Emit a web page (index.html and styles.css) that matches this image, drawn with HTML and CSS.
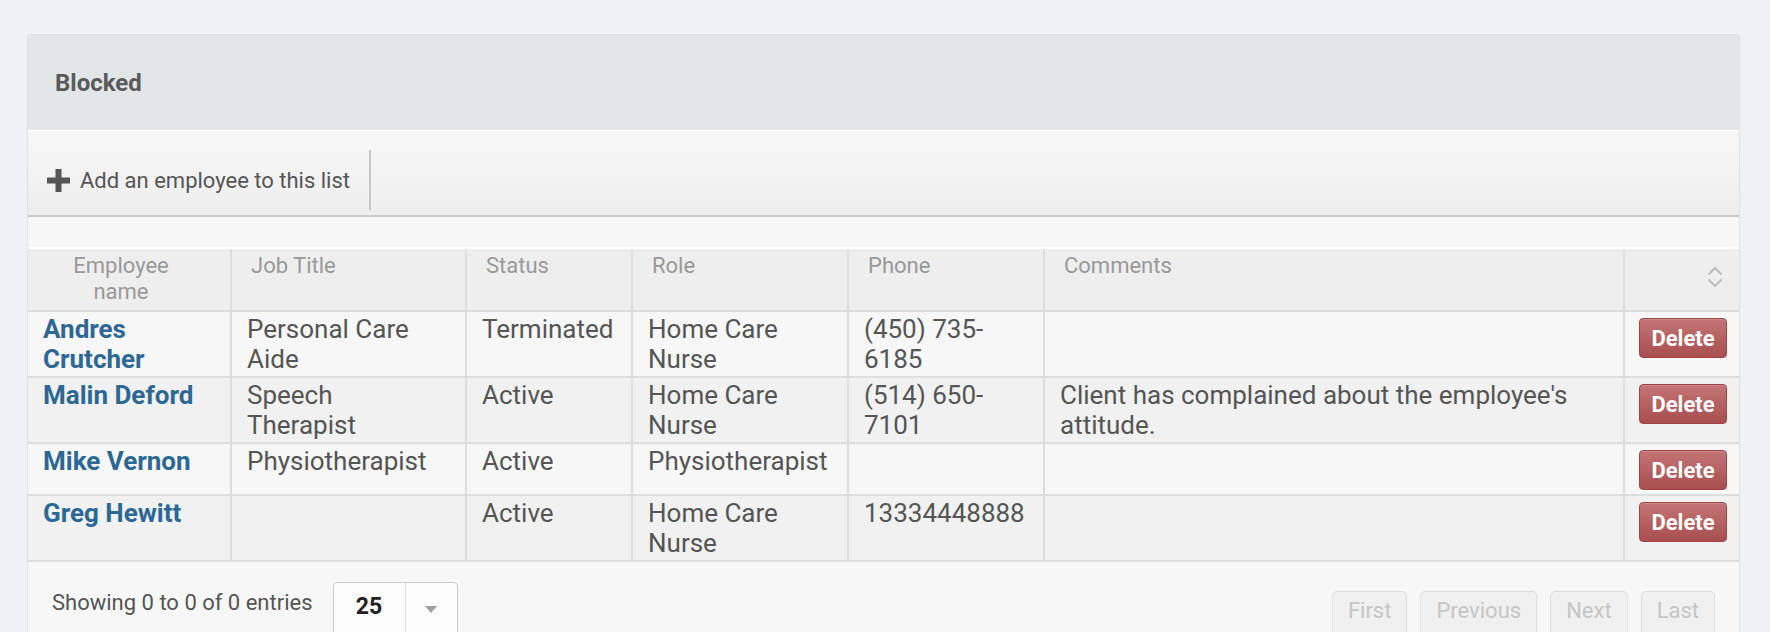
FILE: index.html
```html
<!DOCTYPE html>
<html>
<head>
<meta charset="utf-8">
<title>Blocked</title>
<link rel="stylesheet" href="styles.css">
</head>
<body>
<div class="panel">
  <div class="panel-heading">
    <h3 class="panel-title">Blocked</h3>
  </div>
  <div class="toolbar">
    <button class="tool-btn" type="button">
      <svg class="plus" width="23" height="23" viewBox="0 0 23 23"><path d="M8.5 0h6v8.5h8.5v6h-8.5v8.5h-6v-8.5h-8.5v-6h8.5z" fill="#555"/></svg>
      <span>Add an employee to this list</span>
    </button>
  </div>
  <div class="spacer"></div>
  <table class="grid">
    <colgroup>
      <col class="w-name"><col class="w-job"><col class="w-status"><col class="w-role"><col class="w-phone"><col class="w-comments"><col class="w-action">
    </colgroup>
    <thead>
      <tr>
        <th class="th-name">Employee name</th>
        <th>Job Title</th>
        <th>Status</th>
        <th>Role</th>
        <th>Phone</th>
        <th>Comments</th>
        <th class="th-action">
          <svg class="sort" width="16" height="24" viewBox="0 0 16 24"><path d="M1.5 9.5L8 3l6.5 6.5M1.5 14.5L8 21l6.5-6.5" fill="none" stroke="#bdbdbd" stroke-width="2"/></svg>
        </th>
      </tr>
    </thead>
    <tbody>
      <tr class="odd">
        <td class="name"><a href="#">Andres Crutcher</a></td>
        <td class="job">Personal Care Aide</td>
        <td>Terminated</td>
        <td>Home Care Nurse</td>
        <td>(450) 735-6185</td>
        <td></td>
        <td class="action"><button class="btn-delete" type="button">Delete</button></td>
      </tr>
      <tr class="even">
        <td class="name"><a href="#">Malin Deford</a></td>
        <td class="job">Speech Therapist</td>
        <td>Active</td>
        <td>Home Care Nurse</td>
        <td>(514) 650-7101</td>
        <td>Client has complained about the employee's attitude.</td>
        <td class="action"><button class="btn-delete" type="button">Delete</button></td>
      </tr>
      <tr class="odd">
        <td class="name"><a href="#">Mike Vernon</a></td>
        <td class="job">Physiotherapist</td>
        <td>Active</td>
        <td>Physiotherapist</td>
        <td></td>
        <td></td>
        <td class="action"><button class="btn-delete" type="button">Delete</button></td>
      </tr>
      <tr class="even">
        <td class="name"><a href="#">Greg Hewitt</a></td>
        <td class="job"></td>
        <td>Active</td>
        <td>Home Care Nurse</td>
        <td>13334448888</td>
        <td></td>
        <td class="action"><button class="btn-delete" type="button">Delete</button></td>
      </tr>
    </tbody>
  </table>
  <div class="footer">
    <div class="info">Showing 0 to 0 of 0 entries</div>
    <div class="length">
      <span class="length-val">25</span>
      <span class="length-caret"><span class="caret"></span></span>
    </div>
    <div class="pager">
      <button class="page-btn" type="button">First</button>
      <button class="page-btn" type="button">Previous</button>
      <button class="page-btn" type="button">Next</button>
      <button class="page-btn" type="button">Last</button>
    </div>
  </div>
</div>
</body>
</html>
```

FILE: styles.css
```css
html, body {
  margin: 0;
  padding: 0;
  overflow: hidden;
}
body {
  background: #eef2f5;
  font-family: Roboto, "Helvetica Neue", Arial, sans-serif;
  color: #555;
}
.panel {
  margin: 34px 30px 0 27px;
  border: 1px solid #dde1e4;
  border-bottom: none;
  border-radius: 4px 4px 0 0;
  background: #f7f7f7;
}
.panel-heading {
  height: 95px;
  background: #e2e6e9;
  display: flex;
  align-items: center;
  padding-left: 27px;
  border-radius: 4px 4px 0 0;
}
.panel-title {
  margin: 0;
  font-size: 24px;
  font-weight: 700;
  color: #5a5a5a;
}
.toolbar {
  border-top: 1px solid #ffffff;
  border-bottom: 2px solid #cccccc;
  height: 87px;
  background: linear-gradient(#f7f7f7, #eeeeee);
  display: flex;
  align-items: flex-end;
  padding-bottom: 5px;
  box-sizing: border-box;
}
.tool-btn {
  height: 60px;
  display: flex;
  align-items: center;
  gap: 10px;
  padding: 0 19px 0 19px;
  margin: 0;
  border: none;
  border-right: 2px solid #c8c8c8;
  background: linear-gradient(#f5f5f5, #eeeeee);
  font-family: inherit;
  font-size: 22px;
  color: #555;
  white-space: nowrap;
}
.plus {
  flex: none;
  margin-top: 1px;
}
.spacer {
  height: 30px;
  background: #f7f7f7;
  border-bottom: 2px solid #ffffff;
}
.grid {
  width: 100%;
  table-layout: fixed;
  border-collapse: separate;
  border-spacing: 0;
}
.w-name { width: 202px; }
.w-job { width: 235px; }
.w-status { width: 166px; }
.w-role { width: 216px; }
.w-phone { width: 196px; }
.w-comments { width: 580px; }
.w-action { width: 116px; }

.grid th {
  background: #eeeeee;
  color: #999999;
  font-weight: 400;
  font-size: 22px;
  line-height: 26px;
  text-align: left;
  vertical-align: top;
  padding: 4px 10px 5px 19px;
  border-bottom: 2px solid #dddddd;
  border-left: 2px solid #dddddd;
}
.grid th.th-name {
  border-left: none;
  text-align: center;
  padding: 4px 40px 5px 24px;
}
.grid th.th-action {
  text-align: right;
  padding: 16px 16px 0 0;
}
.sort {
  display: block;
  margin-left: auto;
}
.grid td {
  font-size: 26px;
  line-height: 30px;
  color: #555;
  vertical-align: top;
  padding: 2px 15px 2px 15px;
  border-left: 2px solid #dddddd;
  border-bottom: 2px solid #dddddd;
}
.grid td.job {
  padding-right: 24px;
}
.grid td.name {
  border-left: none;
}
.grid tr.odd td { background: #f7f7f7; }
.grid tr.even td { background: #f1f1f1; }
.name a {
  color: #2c6896;
  font-weight: 700;
  text-decoration: none;
}
.grid td.action {
  padding: 6px 0 4px 14px;
}
.btn-delete {
  display: block;
  width: 88px;
  height: 40px;
  padding: 0;
  border: 1px solid #a04444;
  border-radius: 4px;
  background: linear-gradient(#c47476, #a84e4f);
  color: #ffffff;
  font-family: inherit;
  font-weight: 700;
  font-size: 22px;
  box-shadow: inset 0 1px 0 rgba(255,255,255,0.15);
}
.footer {
  display: flex;
  align-items: flex-start;
  padding: 20px 24px 0 24px;
  height: 80px;
  background: #f7f7f7;
}
.info {
  font-size: 22px;
  line-height: 30px;
  margin-top: 6px;
  color: #555;
}
.length {
  display: flex;
  margin-left: 20px;
  height: 60px;
  border: 1px solid #cccccc;
  border-radius: 4px;
  background: #fcfcfc;
}
.length-val {
  width: 71px;
  text-align: center;
  font-weight: 700;
  font-size: 23px;
  color: #222;
  line-height: 30px;
  padding-top: 9px;
  border-right: 1px solid #dddddd;
}
.length-caret {
  width: 51px;
  display: flex;
  justify-content: center;
  padding-top: 23px;
}
.caret {
  width: 0;
  height: 0;
  border-top: 7px solid #a0a0a0;
  border-left: 6.5px solid transparent;
  border-right: 6.5px solid transparent;
}
.pager {
  margin-left: auto;
  margin-top: 9px;
  display: flex;
  gap: 13px;
}
.page-btn {
  height: 54px;
  padding: 4px 15px 0;
  align-self: flex-start;
  border: 1px solid #dddddd;
  border-radius: 5px;
  background: #f0f0f0;
  color: #c6c6c6;
  font-family: inherit;
  font-size: 22px;
  line-height: 30px;
  display: flex;
  align-items: flex-start;
  margin: 0;
}
```
